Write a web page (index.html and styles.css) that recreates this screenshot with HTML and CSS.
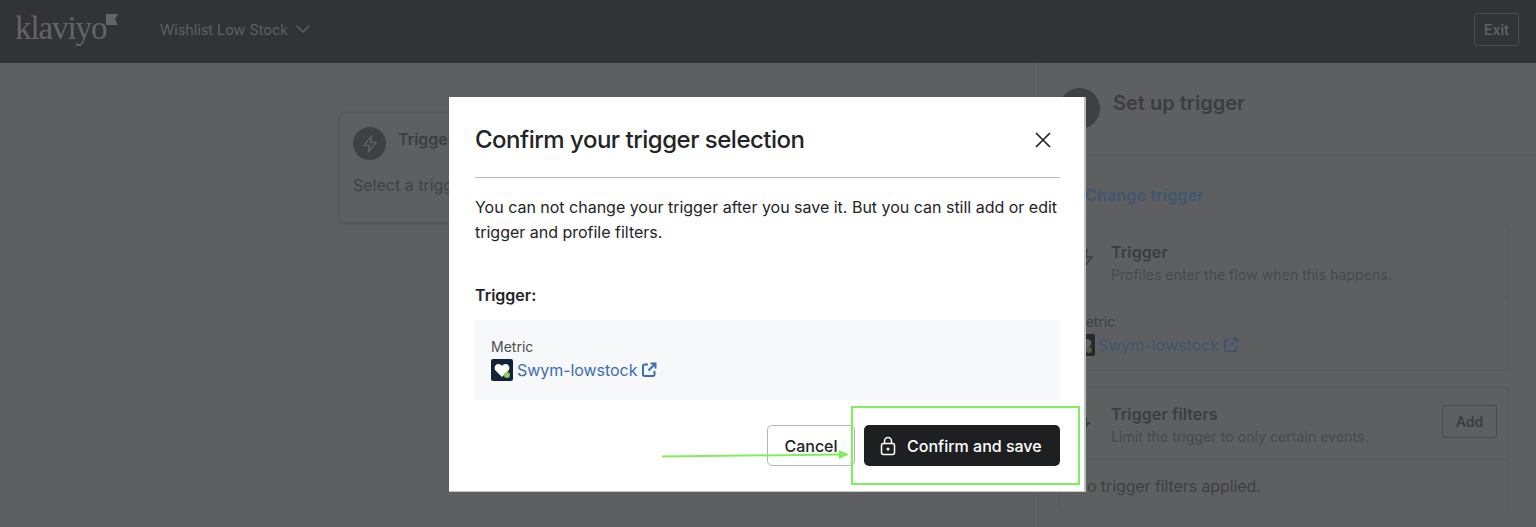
FILE: index.html
```html
<!DOCTYPE html>
<html lang="en">
<head>
<meta charset="utf-8">
<title>Wishlist Low Stock</title>
<link rel="stylesheet" href="styles.css">
</head>
<body>
<header class="topbar">
  <div class="logo">klaviyo<svg class="logo-flag" width="12" height="11" viewBox="0 0 12 11"><path d="M0 0H12L9 5.500L12 11H0Z"/></svg></div>
  <div class="flow-name">Wishlist Low Stock
    <svg width="16" height="10" viewBox="0 0 16 10"><path d="M1.500 1.500L8 8L14.500 1.500" fill="none" stroke="currentColor" stroke-width="1.500"/></svg>
  </div>
  <div class="exit">Exit</div>
</header>
<main class="main">
  <section class="canvas">
    <div class="node">
      <div class="node-head">
        <span class="node-icon"><svg width="20" height="20" viewBox="0 0 20 20"><path d="M11.500 2L4 11.500H9.500L8.500 18L16 8.500H10.500Z" fill="none" stroke="#5e5f61" stroke-width="1.600" stroke-linejoin="round"/></svg></span>
        <span class="node-title">Trigger</span>
      </div>
      <div class="node-text">Select a trigger</div>
    </div>
  </section>
  <aside class="panel">
    <div class="panel-head"><span class="panel-circle"></span><h2>Set up trigger</h2></div>
    <div class="panel-body">
      <div class="change">Change trigger</div>
      <div class="card">
        <div class="card-row">
          <svg class="card-icon" width="20" height="24" viewBox="0 0 20 24"><path d="M11 3L4 13H10L8 21L16 11H10Z" fill="none" stroke="#3c3d3f" stroke-width="1.600"/></svg>
          <div><div class="card-title">Trigger</div><div class="card-sub">Profiles enter the flow when this happens.</div></div>
        </div>
        <div class="card-metric">
          <div class="metric-label">Metric</div>
          <div class="metric-link">
            <svg width="22" height="22" viewBox="0 0 22 22"><rect width="22" height="22" rx="2" fill="#26282a"/><path d="M11 18L4.500 11.500C2.500 9 4 5 7.500 5C9 5 10.300 5.800 11 7C11.700 5.800 13 5 14.500 5C18 5 19.500 9 17.500 11.500Z" fill="#5e5f61"/><circle cx="16" cy="16" r="3" fill="#4f5f3f"/></svg>
            <span class="metric-name">Swym-lowstock</span>
            <svg width="16" height="16" viewBox="0 0 16 16"><path d="M7 2.500H3.500A1.500 1.500 0 0 0 2 4V12.500A1.500 1.500 0 0 0 3.500 14H12A1.500 1.500 0 0 0 13.500 12.500V9M9.500 1.500H14.500V6.500M14 2L7.500 8.500" fill="none" stroke="currentColor" stroke-width="2"/></svg>
          </div>
        </div>
      </div>
      <div class="card card-filters">
        <div class="card-row card-row-filters">
          <svg class="card-icon" width="20" height="24" viewBox="0 0 20 24"><path d="M11 9L6 15H10L9 21L15 14H11Z" fill="#3c3d3f"/><path d="M6 3L3 7H6L5 10" fill="none" stroke="#3c3d3f" stroke-width="1.500"/></svg>
          <div class="card-copy"><div class="card-title">Trigger filters</div><div class="card-sub">Limit the trigger to only certain events.</div></div>
          <div class="add">Add</div>
        </div>
        <div class="card-empty">No trigger filters applied.</div>
      </div>
    </div>
  </aside>
</main>
<div class="modal">
  <div class="modal-head">
    <h1>Confirm your trigger selection</h1>
    <svg class="close" width="16" height="16" viewBox="0 0 16 16"><path d="M1 1L15 15M15 1L1 15" stroke="#232426" stroke-width="1.700" fill="none"/></svg>
  </div>
  <p class="modal-text">You can not change your trigger after you save it. But you can still add or edit trigger and profile filters.</p>
  <div class="modal-label">Trigger:</div>
  <div class="metric-box">
    <div class="box-label">Metric</div>
    <div class="box-link">
      <svg width="22" height="22" viewBox="0 0 22 22"><rect width="22" height="22" rx="2" fill="#13243a"/><path d="M11 18L4.500 11.500C2.500 9 4 5 7.500 5C9 5 10.300 5.800 11 7C11.700 5.800 13 5 14.500 5C18 5 19.500 9 17.500 11.500Z" fill="#fff"/><circle cx="16" cy="16" r="3" fill="#8ccb5e"/></svg>
      <span class="box-name">Swym-lowstock</span>
      <svg width="16" height="16" viewBox="0 0 16 16"><path d="M7 2.500H3.500A1.500 1.500 0 0 0 2 4V12.500A1.500 1.500 0 0 0 3.500 14H12A1.500 1.500 0 0 0 13.500 12.500V9M9.500 1.500H14.500V6.500M14 2L7.500 8.500" fill="none" stroke="currentColor" stroke-width="2"/></svg>
    </div>
  </div>
  <div class="modal-actions">
    <div class="btn-cancel">Cancel</div>
    <div class="btn-confirm">
      <svg width="16" height="20" viewBox="0 0 16 20"><rect x="1.500" y="7.500" width="13" height="11" rx="2" fill="none" stroke="#fff" stroke-width="1.500"/><path d="M4.500 7.500V5A3.500 3.500 0 0 1 11.500 5V7.500" fill="none" stroke="#fff" stroke-width="1.500"/><circle cx="8" cy="13" r="1.500" fill="#fff"/></svg>
      <span>Confirm and save</span>
    </div>
  </div>
</div>
<div class="highlight"></div>
<svg class="arrow" width="200" height="16" viewBox="0 0 200 16"><path d="M0 9.500L178 7.500" stroke="#7ef05a" stroke-width="2"/><path d="M177 3L187 7.500L177 12Z" fill="#7ef05a"/></svg>
</body>
</html>
```
FILE: styles.css
```css
* { box-sizing: border-box; }
html, body { margin: 0; height: 527px; overflow: hidden; }
body { position: relative; background: #5e5f61; font-family: Inter, "Liberation Sans", sans-serif; color: #3c3d3f; }
h1, h2, p { margin: 0; font-weight: inherit; }

.topbar { height: 63px; background: #323335; display: flex; align-items: center; padding: 0 17px 5px 15px; color: #5f6062; }
.logo { font-family: "Liberation Serif", serif; font-size: 33px; line-height: 1; letter-spacing: -1.100px; width: 145px; display: flex; align-items: flex-start; color: #636466; height: 32px; margin-top: -3px; }
.logo-flag { fill: #636466; margin-top: 2px; }
.flow-name { font-size: 14.500px; display: flex; align-items: center; gap: 7px; flex: 1; letter-spacing: -.05px; }
.exit { width: 45px; height: 33px; border: 1px solid #4d4e50; border-radius: 3px; font-size: 14px; font-weight: 600; display: flex; align-items: center; justify-content: center; }

.main { display: flex; height: 464px; }
.canvas { width: 1034px; position: relative; border-right: 1px solid #58595b; }
.node { position: absolute; left: 339px; top: 49px; width: 260px; height: 111px; border: 1px solid #4a5a6c; border-radius: 6px; padding: 14px 13px; box-shadow: 0 1px 3px rgba(0,0,0,.15); }
.node-head { display: flex; gap: 12px; }
.node-icon { width: 33px; height: 33px; border-radius: 50%; background: #3f4042; display: flex; align-items: center; justify-content: center; }
.node-title { font-size: 16px; font-weight: 600; margin-top: 2px; }
.node-text { font-size: 16px; margin-top: 15px; color: #414244; }

.panel { flex: 1; }
.panel-head { height: 93px; border-bottom: 1px solid #58595b; display: flex; padding: 25px 0 0 26px; gap: 13px; }
.panel-circle { width: 41px; height: 41px; border-radius: 50%; background: #3f4042; margin-left: -1px; }
.panel-head h2 { font-size: 20px; font-weight: 600; line-height: 32px; color: #3c3d3f; margin-top: -1px; }
.panel-body { padding: 27px 26px 0 25px; }
.change { font-size: 16px; font-weight: 600; color: #405670; line-height: 25px; padding-left: 26px; margin-bottom: 17px; letter-spacing: .2px; }
.card { border: 1px solid #58595b; border-radius: 6px; height: 146px; }
.card-row { display: flex; gap: 15px; padding: 14px 16px 0 16px; height: 72px; border-bottom: 1px solid #58595b; }
.card-icon { flex: none; margin-top: 6px; }
.card-title { font-size: 16px; font-weight: 600; line-height: 24px; letter-spacing: .1px; }
.card-sub { font-size: 14px; line-height: 22px; color: #48494b; letter-spacing: .07px; }
.card-metric { padding: 14px 16px 0 13px; }
.metric-label { font-size: 14px; line-height: 20px; color: #3e3f41; }
.metric-link { display: flex; align-items: center; gap: 3px; font-size: 16px; line-height: 26px; color: #405670; }
.metric-name { margin-right: 1px; }
.card-filters { margin-top: 16px; height: 124px; }
.card-row-filters { height: 72px; }
.card-copy { flex: 1; }
.add { width: 55px; height: 33px; margin-top: 3px; margin-right: -4px; border: 1px solid #48494b; border-radius: 3px; display: flex; align-items: center; justify-content: center; font-size: 14px; font-weight: 600; }
.card-empty { font-size: 16px; line-height: 24px; padding: 14px 15px; color: #3e3f41; letter-spacing: -.1px; }

.modal { position: absolute; left: 449px; top: 97px; width: 637px; height: 395px; background: #fff; padding: 26px 24px 0 26px; border-right: 2px solid #bdbebf; border-bottom: 1px solid #c8c8c8; color: #232426; }
.modal-head { height: 55px; border-bottom: 1px solid #b9b9b9; display: flex; justify-content: space-between; padding-right: 9px; }
.modal-head h1 { font-size: 24px; font-weight: 500; line-height: 34px; letter-spacing: -.5px; }
.close { margin-top: 9px; }
.modal-text { font-size: 16px; line-height: 25px; margin-top: 17px; letter-spacing: -.01px; }
.modal-label { font-size: 16px; font-weight: 600; line-height: 24px; margin-top: 38px; }
.metric-box { height: 80px; background: #f7f8fa; margin-top: 13px; padding: 17px 16px 0; }
.box-label { font-size: 14px; line-height: 20px; color: #4b4d50; }
.box-link { display: flex; align-items: center; gap: 4px; font-size: 16px; line-height: 24px; color: #3c6cb4; margin-top: 1px; letter-spacing: -.05px; }
.modal-actions { display: flex; justify-content: flex-end; gap: 9px; margin-top: 25px; }
.btn-cancel { width: 88px; height: 41px; border: 1px solid #b5b5b5; border-radius: 5px; display: flex; align-items: center; justify-content: center; font-size: 16px; font-weight: 500; }
.btn-confirm { width: 196px; height: 41px; background: #1e1f21; border-radius: 5px; color: #fff; display: flex; align-items: center; gap: 11px; padding-left: 16px; font-size: 16px; font-weight: 500; }

.highlight { position: absolute; left: 851px; top: 406px; width: 229px; height: 79px; border: 2px solid #7ef05a; }
.arrow { position: absolute; left: 662px; top: 447px; }
```
